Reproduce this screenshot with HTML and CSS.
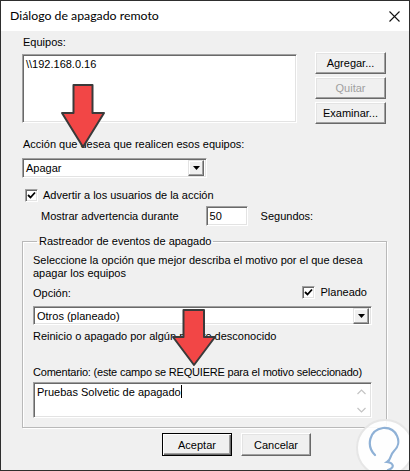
FILE: index.html
```html
<!DOCTYPE html>
<html lang="es">
<head>
<meta charset="utf-8">
<title>Diálogo de apagado remoto</title>
<link rel="stylesheet" href="styles.css">
</head>
<body>
<div class="window">
  <div class="titlebar">
    <span class="title">Diálogo de apagado remoto</span>
    <svg class="close" width="11" height="11" viewBox="0 0 11 11"><path d="M0.5 0.5 L10.5 10.5 M10.5 0.5 L0.5 10.5" stroke="#111" stroke-width="1.1" fill="none"/></svg>
  </div>
  <div class="content">
    <div class="top-row">
      <div class="computers">
        <div class="lbl">Equipos:</div>
        <div class="sunken list"><span>\\192.168.0.16</span></div>
      </div>
      <div class="side-buttons">
        <div class="btn">Agregar...</div>
        <div class="btn disabled">Quitar</div>
        <div class="btn">Examinar...</div>
      </div>
    </div>
    <div class="lbl action-lbl">Acción que desea que realicen esos equipos:</div>
    <div class="sunken combo combo-action">
      <span class="combo-text">Apagar</span>
      <span class="drop"><svg width="7" height="4" viewBox="0 0 7 4"><path d="M0 0 H7 L3.5 4 Z" fill="#000"/></svg></span>
    </div>
    <div class="check-row warn-check">
      <span class="checkbox"><svg width="9" height="9" viewBox="0 0 9 9"><path d="M1 4 L3.5 6.5 L8 1.5" stroke="#000" stroke-width="1.8" fill="none"/></svg></span>
      <span>Advertir a los usuarios de la acción</span>
    </div>
    <div class="warn-row">
      <span>Mostrar advertencia durante</span>
      <span class="sunken num">50</span>
      <span class="secs">Segundos:</span>
    </div>
    <fieldset class="group">
      <legend>Rastreador de eventos de apagado</legend>
      <p class="desc">Seleccione la opción que mejor describa el motivo por el que desea apagar los equipos</p>
      <div class="option-row">
        <span>Opción:</span>
        <span class="check-row planned">
          <span class="checkbox"><svg width="9" height="9" viewBox="0 0 9 9"><path d="M1 4 L3.5 6.5 L8 1.5" stroke="#000" stroke-width="1.8" fill="none"/></svg></span>
          <span>Planeado</span>
        </span>
      </div>
      <div class="sunken combo combo-reason">
        <span class="combo-text">Otros (planeado)</span>
        <span class="drop"><svg width="7" height="4" viewBox="0 0 7 4"><path d="M0 0 H7 L3.5 4 Z" fill="#000"/></svg></span>
      </div>
      <div class="reason-desc">Reinicio o apagado por algún motivo desconocido</div>
      <div class="comment-lbl">Comentario: (este campo se REQUIERE para el motivo seleccionado)</div>
      <div class="sunken comment">
        <span class="comment-text">Pruebas Solvetic de apagado<span class="caret"></span></span>
        <span class="vscroll">
          <svg width="9" height="6" viewBox="0 0 9 6"><path d="M0.5 5 L4.5 1 L8.5 5" stroke="#c4c4c4" stroke-width="1.2" fill="none"/></svg>
          <svg width="9" height="6" viewBox="0 0 9 6"><path d="M0.5 1 L4.5 5 L8.5 1" stroke="#c4c4c4" stroke-width="1.2" fill="none"/></svg>
        </span>
      </div>
    </fieldset>
    <div class="footer">
      <div class="btn default">Aceptar</div>
      <div class="btn">Cancelar</div>
    </div>
  </div>
  <svg class="overlay" width="410" height="471" viewBox="0 0 410 471">
    <g stroke="#3a3a3a" stroke-width="2" stroke-linejoin="round" fill="#f24646">
      <path d="M73.5 85 L92.5 85 L92.5 113 L104 113 L83 147 L62 113 L73.5 113 Z"/>
      <path d="M183.5 310 L204 310 L204 337 L215 337 L194 365 L173 337 L183.5 337 Z"/>
    </g>
    <circle cx="385" cy="448" r="28" fill="#ffffff" fill-opacity="0.9" stroke="#e6e6e6" stroke-width="2"/>
    <path d="M375 455 C366 446 369 430 383 428 C397 427 403 443 394 451 C389 456 392 459 387 462 C394 463 395 468 388 470" stroke="#8fb1d6" stroke-width="2.2" fill="none" stroke-linecap="round"/>
  </svg>
</div>
</body>
</html>
```
FILE: styles.css
```css
html, body {
  margin: 0;
  padding: 0;
  background: #ffffff;
}
.window {
  position: relative;
  width: 410px;
  height: 471px;
  box-sizing: border-box;
  border: 1px solid #2e2e2e;
  background: #f0f0f0;
  display: flex;
  flex-direction: column;
  font-family: "Liberation Sans", Arial, sans-serif;
  font-size: 11px;
  line-height: 14px;
  color: #000;
  overflow: hidden;
}
.titlebar {
  height: 30px;
  flex: none;
  background: #fff;
  display: flex;
  align-items: center;
  justify-content: space-between;
  padding: 0 9px 0 9px;
}
.title {
  font-family: Lato, "Noto Sans", sans-serif;
  font-size: 12.3px;
  color: #000;
}
.content {
  padding: 4px 0 0 21px;
  display: flex;
  flex-direction: column;
  align-items: flex-start;
}
.top-row {
  display: flex;
}
.lbl {
  padding-left: 1px;
}
.sunken {
  background: #fff;
  border: 1px solid;
  border-color: #a0a0a0 #ffffff #ffffff #a0a0a0;
  box-shadow: inset 1px 1px 0 #696969, inset -1px -1px 0 #e3e3e3;
  box-sizing: border-box;
}
.list {
  margin-top: 5px;
  width: 275px;
  height: 69px;
  padding: 2px 3px;
}
.side-buttons {
  margin-left: 18px;
  padding-top: 17px;
  display: flex;
  flex-direction: column;
  gap: 3px;
}
.btn {
  width: 71px;
  height: 22px;
  box-sizing: border-box;
  display: flex;
  align-items: center;
  justify-content: center;
  background: #f0f0f0;
  border: 1px solid;
  border-color: #ffffff #696969 #696969 #ffffff;
  box-shadow: inset -1px -1px 0 #a0a0a0, inset 1px 1px 0 #e3e3e3;
}
.btn.disabled {
  color: #a0a0a0;
}
.action-lbl {
  margin-top: 13px;
}
.combo {
  display: flex;
  align-items: center;
  justify-content: space-between;
  height: 20px;
  padding: 0 2px 0 3px;
}
.combo-action {
  margin-top: 7px;
  width: 185px;
}
.drop {
  width: 16px;
  height: 16px;
  box-sizing: border-box;
  display: flex;
  align-items: center;
  justify-content: center;
  background: #f0f0f0;
  border: 1px solid;
  border-color: #e3e3e3 #696969 #696969 #e3e3e3;
  box-shadow: inset -1px -1px 0 #a0a0a0, inset 1px 1px 0 #fff;
}
.check-row {
  display: flex;
  align-items: center;
}
.warn-check {
  margin-top: 10px;
  padding-left: 3px;
}
.checkbox {
  width: 13px;
  height: 13px;
  box-sizing: border-box;
  margin-right: 5px;
  display: flex;
  align-items: center;
  justify-content: center;
  background: #fff;
  border: 1px solid;
  border-color: #a0a0a0 #fff #fff #a0a0a0;
  box-shadow: inset 1px 1px 0 #696969, inset -1px -1px 0 #e3e3e3;
}
.warn-row {
  margin-top: 4px;
  padding-left: 19px;
  display: flex;
  align-items: center;
}
.num {
  margin-left: 27px;
  width: 42px;
  height: 20px;
  padding: 2px 3px;
  line-height: 15px;
}
.secs {
  margin-left: 13px;
}
.group {
  margin: 8px 0 0 0;
  width: 365px;
  box-sizing: border-box;
  padding: 0 14px 9px 10px;
  border: 1px solid #b9b9b9;
  box-shadow: 1px 1px 0 #fff, inset 1px 1px 0 #fff;
}
.group legend {
  margin-left: 4px;
  padding: 0 2px;
  line-height: 14px;
}
.desc {
  margin: 6px 0 0 0;
  line-height: 13px;
  width: 330px;
}
.option-row {
  margin-top: 4px;
  display: flex;
  justify-content: space-between;
  align-items: center;
  padding-right: 5px;
}
.option-row > span:first-child {
  padding-top: 2px;
}
.planned .checkbox {
  margin-right: 6px;
}
.combo-reason {
  margin-top: 6px;
  width: 339px;
  height: 19px;
  padding-left: 3px;
}
.reason-desc {
  margin-top: 4px;
}
.comment-lbl {
  margin-top: 22px;
  white-space: nowrap;
  letter-spacing: -0.2px;
}
.comment {
  margin-top: 3px;
  width: 339px;
  height: 36px;
  display: flex;
  justify-content: space-between;
  padding: 2px 2px 2px 3px;
}
.caret {
  display: inline-block;
  width: 1px;
  height: 13px;
  background: #000;
  vertical-align: -2px;
}
.vscroll {
  width: 15px;
  display: flex;
  flex-direction: column;
  justify-content: space-between;
  align-items: center;
  padding: 4px 0 2px;
}
.footer {
  margin-top: 5px;
  margin-left: 140px;
  display: flex;
  gap: 9px;
}
.footer .btn {
  width: 70px;
  height: 23px;
}
.btn.default {
  border: 1px solid #000;
  box-shadow: inset 1px 1px 0 #fff, inset -1px -1px 0 #696969, inset -2px -2px 0 #a0a0a0;
}
.overlay {
  position: absolute;
  left: -1px;
  top: -1px;
  pointer-events: none;
}
```
